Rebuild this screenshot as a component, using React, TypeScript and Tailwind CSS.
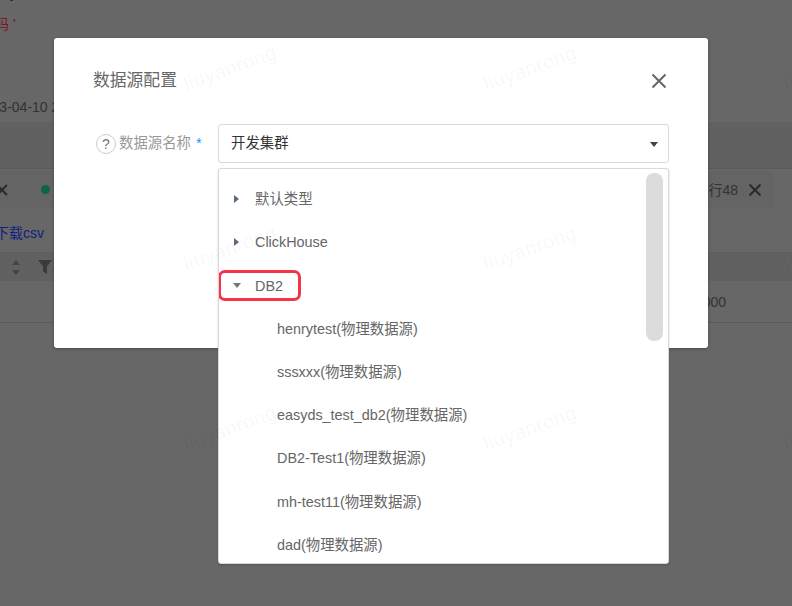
import React from 'react';

const groups = ['默认类型', 'ClickHouse'];
const sources = ['henrytest', 'sssxxx', 'easyds_test_db2', 'DB2-Test1', 'mh-test11', 'dad'];
const marks = [
  [-70, 68], [230, 68], [530, 68], [830, 68],
  [-70, 248], [230, 248], [530, 248], [830, 248],
  [-70, 428], [230, 428], [530, 428], [830, 428],
];

const Background = () => (
  <div className="h-[606px] overflow-hidden bg-[#cecece] text-sm text-[#666]">
    <div className="h-[122px] flex flex-col">
      <div className="h-5 shrink-0 -mt-[17px] pl-[10px] leading-5 text-[#444]">y</div>
      <div className="pt-[11px] -ml-[5px] leading-5 text-[#f0304a] whitespace-nowrap">码 '</div>
      <div className="pt-[63px] -ml-[24px] leading-5 whitespace-nowrap">2023-04-10 22:00:00</div>
    </div>
    <div className="h-[47px] bg-[#c2c2c2] border-b border-[#b4b4b4]" />
    <div className="h-[2px]" />
    <div className="h-[37px] w-[773px] flex items-center justify-between bg-[#c8c8c8] pr-[12px]">
      <div className="flex items-center">
        <svg className="-ml-[4px]" width="12" height="12" viewBox="0 0 12 12" stroke="#555" strokeWidth="2" fill="none"><path d="M1 1l10 10M11 1L1 11" /></svg>
        <span className="ml-[33px] w-[9px] h-[9px] rounded-full bg-[#14c896]" />
      </div>
      <div className="flex items-center gap-[11px]">
        <span>行48</span>
        <svg width="12" height="12" viewBox="0 0 12 12" stroke="#555" strokeWidth="2" fill="none"><path d="M0.5 0.5l11 11M11.5 0.5l-11 11" /></svg>
      </div>
    </div>
    <div className="h-[44px] pt-[6px] flex items-center -ml-[5px] text-[#2840ff]">下载csv</div>
    <div className="h-[29px] flex items-center bg-[#c2c2c2] border-t border-[#bcbcbc] pl-[11px] gap-[17px]">
      <svg width="10" height="17" viewBox="0 0 10 17" fill="#888"><path d="M5 1l4 5H1zM5 16l4-5H1z" /></svg>
      <svg width="14" height="14" viewBox="0 0 14 14" fill="#777"><path d="M0 0h14L9 6.5V14L5 11.5v-5z" /></svg>
    </div>
    <div className="h-[42px] flex items-center justify-end border-b border-[#b4b4b4] pr-[66px]">2000</div>
  </div>
);

export default function App() {
  return (
    <div className="relative w-[792px] h-[606px] overflow-hidden font-['Liberation_Sans','Noto_Sans_CJK_SC',sans-serif]">
      <Background />
      <div className="absolute inset-0 bg-black/50" />

      <div className="absolute left-[54px] top-[38px] w-[654px] h-[310px] bg-white rounded-[3px] shadow-[0_1px_3px_rgba(0,0,0,0.3)]">
        <div className="flex items-center justify-between pl-[39px] pr-[41px] pt-[31px]">
          <h2 className="text-[16.8px] font-normal leading-6 text-[#666]">数据源配置</h2>
          <svg width="16" height="16" viewBox="0 0 16 16" stroke="#666" strokeWidth="2" fill="none"><path d="M1.5 1.5l13 13M14.5 1.5l-13 13" /></svg>
        </div>
        <div className="flex items-start mt-[31px] pl-[42px] pr-[39px]">
          <div className="w-[122px] h-[39px] flex items-center text-[14.4px] text-[#999] whitespace-nowrap">
            <span className="w-5 h-5 mr-[3px] flex items-center justify-center rounded-full border border-[#ccc] text-[#777] text-sm">?</span>
            数据源名称
            <span className="ml-[5px] text-[#1890ff]">*</span>
          </div>
          <div className="flex-1 h-[39px] pt-px flex items-center justify-between border border-[#d9d9d9] rounded-[3px] pl-3 pr-[10px] text-[14.4px] text-[#333]">
            开发集群
            <span className="border-x-[4px] border-x-transparent border-t-[5px] border-t-[#444]" />
          </div>
        </div>
      </div>

      <div className="absolute left-[218px] top-[168px] w-[451px] h-[396px] overflow-hidden bg-white rounded-[3px] border border-[#d9d9d9] text-[14.4px] text-[#666] shadow-[0_1px_2px_rgba(0,0,0,0.2)]">
        <div className="pt-[9.5px]">
          {groups.map(g => (
            <div key={g} className="h-[43.2px] flex items-center pl-[15px]">
              <span className="-mt-[3px] border-y-[4.5px] border-y-transparent border-l-[5px] border-l-[#5b6b7b]" />
              <span className="ml-[16px]">{g}</span>
            </div>
          ))}
          <div className="h-[43.2px] flex items-center pl-[14px]">
            <span className="-mt-px border-x-[4.5px] border-x-transparent border-t-[5px] border-t-[#777]" />
            <span className="ml-[14px]">DB2</span>
          </div>
          {sources.map(s => (
            <div key={s} className="h-[43.2px] flex items-center pl-[58px] whitespace-nowrap">{s}(物理数据源)</div>
          ))}
        </div>
        <div className="absolute right-[5px] top-[4px] w-[17px] h-[168px] rounded-lg bg-[#dcdcdc]" />
        <div className="absolute -left-[1px] top-[101px] w-[83px] h-[31px] rounded-[7px] border-[3px] border-[#f5344a]" />
      </div>

      <div className="absolute inset-0 pointer-events-none">
        {marks.map(([x, y]) => (
          <span
            key={`${x}-${y}`}
            className="absolute w-[120px] h-6 -ml-[60px] -mt-3 text-center text-xl leading-6 tracking-wide text-black/[0.04] -rotate-[20deg]"
            style={{ left: x, top: y }}
          >
            liuyanrong
          </span>
        ))}
      </div>
    </div>
  );
}
